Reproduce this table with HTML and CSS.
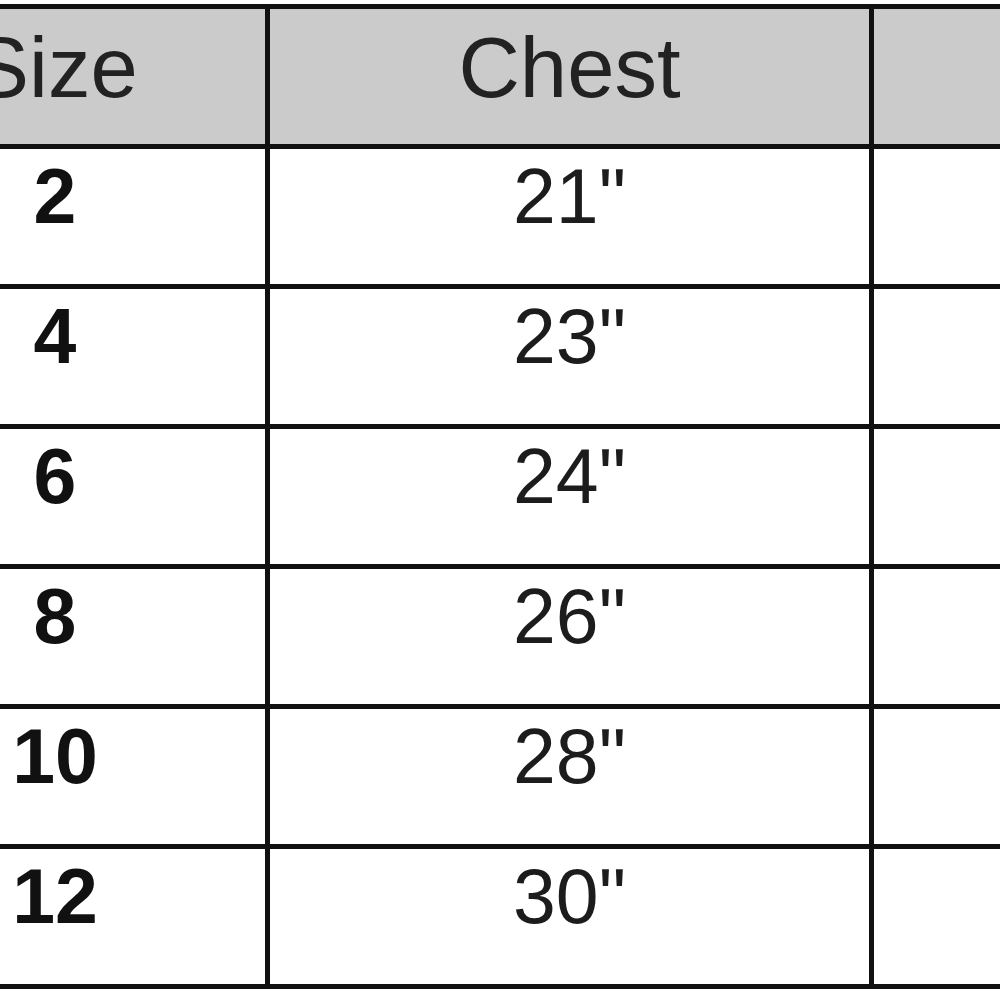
FILE: index.html
```html
<!DOCTYPE html>
<html lang="en">
<head>
<meta charset="utf-8">
<title>Size Chart</title>
<link rel="stylesheet" href="styles.css">
</head>
<body>
<table class="size-chart">
  <colgroup>
    <col class="col-size">
    <col class="col-chest">
    <col class="col-extra">
  </colgroup>
  <thead>
    <tr>
      <th>Size</th>
      <th>Chest</th>
      <th></th>
    </tr>
  </thead>
  <tbody>
    <tr><td class="size">2</td><td>21"</td><td></td></tr>
    <tr><td class="size">4</td><td>23"</td><td></td></tr>
    <tr><td class="size">6</td><td>24"</td><td></td></tr>
    <tr><td class="size">8</td><td>26"</td><td></td></tr>
    <tr><td class="size">10</td><td>28"</td><td></td></tr>
    <tr><td class="size">12</td><td>30"</td><td></td></tr>
  </tbody>
</table>
</body>
</html>
```

FILE: styles.css
```css
html, body {
  margin: 0;
  padding: 0;
  background: #ffffff;
  overflow: hidden;
}

.size-chart {
  border-collapse: separate;
  border-spacing: 5px;
  background: #111111;
  table-layout: fixed;
  width: 1439px;
  margin: 4px 0 0 -160px;
  font-family: "Liberation Sans", Arial, sans-serif;
  color: #1c1c1c;
}

.col-size { width: 420px; }
.col-chest { width: 599px; }
.col-extra { width: 400px; }

.size-chart th,
.size-chart td {
  padding: 0;
  text-align: center;
  vertical-align: top;
  line-height: 1;
}

.size-chart th {
  background: #cbcbcb;
  font-weight: normal;
  font-size: 85px;
  height: 119px;
  padding-top: 16px;
  color: #222222;
}

.size-chart td {
  background: #ffffff;
  font-size: 77px;
  height: 126px;
  padding-top: 9px;
}

.size-chart td.size {
  font-weight: bold;
  color: #111111;
}
```
